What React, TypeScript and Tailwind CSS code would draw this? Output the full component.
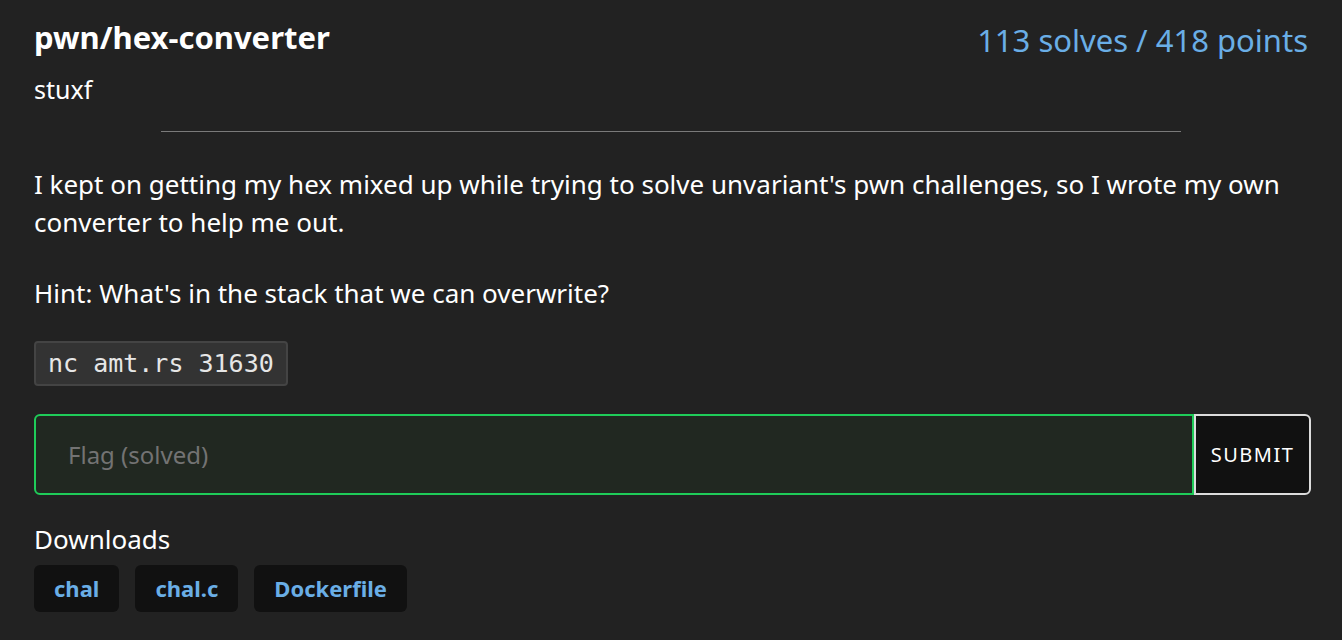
import React from 'react';

const files = ['chal', 'chal.c', 'Dockerfile'];

export default function App() {
  return (
    <div className="min-h-screen bg-[#222222] text-white font-['Noto_Sans',sans-serif]">
      <div className="pl-[34px] pr-[34px] pt-[16px]">
        {/* Header */}
        <div className="flex items-start justify-between">
          <div>
            <h1 className="text-[31px] font-bold leading-[42px]">pwn/hex-converter</h1>
            <div className="text-[25px] leading-[32px] mt-[15px]">stuxf</div>
          </div>
          <div className="text-[31px] leading-[48px] text-[#6aaee6]">113 solves / 418 points</div>
        </div>

        <hr className="w-[80%] mx-auto mt-[26px] border-0 border-t border-[#7a7a7a]" />

        {/* Description */}
        <div className="mt-[33px] text-[26px] leading-[38px]">
          <p>
            I kept on getting my hex mixed up while trying to solve unvariant's pwn challenges, so I wrote my own
            converter to help me out.
          </p>
          <p className="mt-[33px]">Hint: What's in the stack that we can overwrite?</p>
        </div>

        <div className="mt-[29px]">
          <code className="inline-block bg-[#333333] border-2 border-[#444444] rounded-[4px] px-[12px] h-[45px] leading-[41px] text-[25px] text-[#e6e6e6] font-['DejaVu_Sans_Mono',monospace]">
            nc amt.rs 31630
          </code>
        </div>

        {/* Flag input */}
        <div className="mt-[28px] mr-[-3px] flex h-[81px]">
          <div className="flex-1 flex items-center bg-[#212821] border-2 border-[#1fcc59] rounded-l-[6px] pl-[32px]">
            <span className="text-[24px] text-[#737373]">Flag (solved)</span>
          </div>
          <button className="w-[117px] bg-[#111111] border-2 border-[#dcdcdc] rounded-r-[6px] text-[20px] tracking-[1.5px] text-white">
            SUBMIT
          </button>
        </div>

        {/* Downloads */}
        <div className="mt-[25px] text-[26px] leading-[38px]">Downloads</div>
        <div className="mt-[7px] flex gap-[16px]">
          {files.map((f) => (
            <span
              key={f}
              className="bg-[#111111] rounded-[6px] px-[20px] h-[47px] flex items-center text-[22px] font-bold text-[#6aaee6]"
            >
              {f}
            </span>
          ))}
        </div>
      </div>
    </div>
  );
}
